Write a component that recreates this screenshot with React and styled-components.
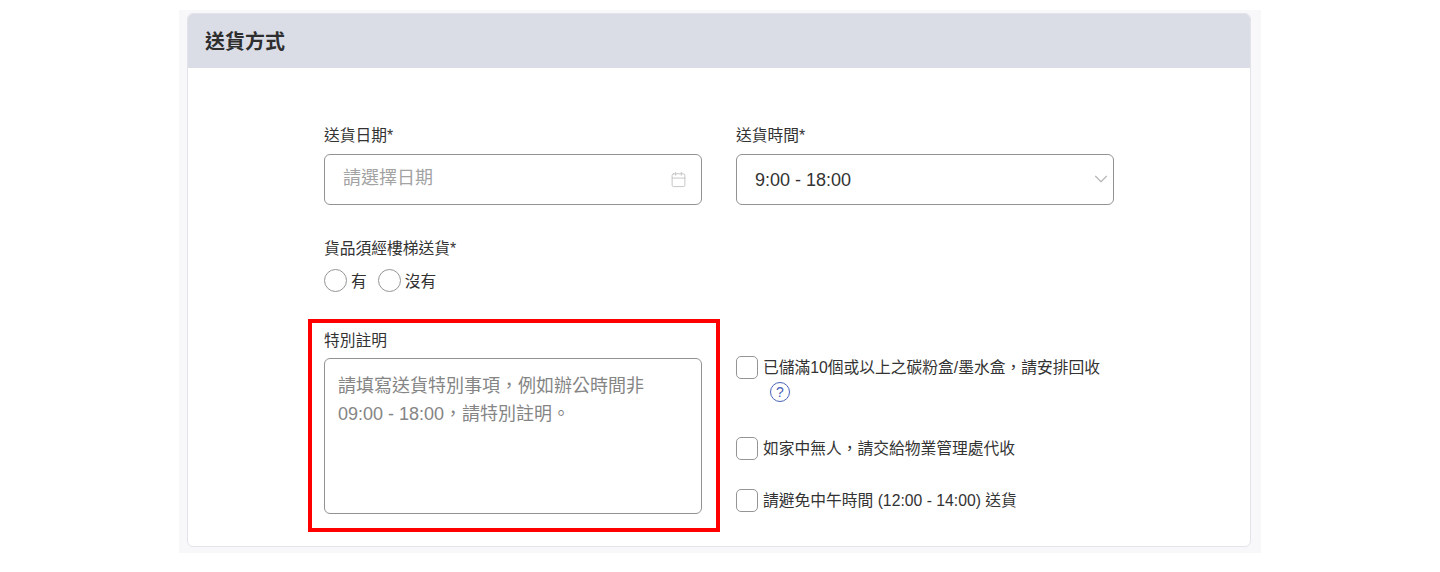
import React from "react";
import styled, { createGlobalStyle } from "styled-components";
import { ChevronDown, Calendar } from "lucide-react";

const Global = createGlobalStyle`
  html, body { margin: 0; padding: 0; background: #fff; }
  body { font-family: "Liberation Sans", "Noto Sans CJK TC", sans-serif; color: #333; }
  * { box-sizing: border-box; }
`;

const Page = styled.div`
  width: 1440px;
  height: 572px;
  padding-top: 10px;
  overflow: hidden;
`;
const Backdrop = styled.div`
  width: 1082px;
  height: 543px;
  margin-left: 179px;
  padding: 3px 10px 6px 8px;
  background: #f8f8fa;
`;
const Card = styled.section`
  height: 534px;
  background: #fff;
  border: 1px solid #e2e4ea;
  border-radius: 6px;
  overflow: hidden;
`;
const CardHeader = styled.h2`
  margin: -1px -1px 0;
  height: 55px;
  padding: 0 0 1px 18px;
  display: flex;
  align-items: center;
  background: #dadde6;
  font-weight: 700;
  font-size: 20px;
  color: #2e2e2e;
`;
const Form = styled.form`
  width: 790px;
  margin-left: 136px;
  padding-top: 58px;
  display: grid;
  grid-template-columns: 378px 378px;
  column-gap: 34px;
  align-items: start;
`;
const Field = styled.div`
  position: relative;
  display: flex;
  flex-direction: column;
  margin-bottom: ${(p) => p.$mb || 0}px;
  grid-column: ${(p) => p.$span || "auto"};
`;
const Label = styled.label`
  font-size: 15.75px;
  line-height: 20px;
  margin-bottom: ${(p) => p.$mb ?? 8}px;
  color: #333;
`;
const Control = styled.div`
  position: relative;
  height: 51px;
`;
const TextInput = styled.input`
  width: 100%;
  height: 100%;
  padding: 0 48px 3px 18px;
  border: 1px solid #929292;
  border-radius: 6px;
  background: #fff;
  font: inherit;
  font-size: 18px;
  color: #333;
  outline: none;
  &::placeholder { color: #a3a3a3; opacity: 1; }
`;
const SelectBox = styled.select`
  width: 100%;
  height: 100%;
  padding: 0 40px 0 18px;
  border: 1px solid #929292;
  border-radius: 6px;
  background: #fff;
  font: inherit;
  font-size: 18px;
  color: #333;
  appearance: none;
  outline: none;
`;
const TrailingIcon = styled.span`
  position: absolute;
  top: ${(p) => p.$top}px;
  right: ${(p) => p.$right}px;
  display: flex;
  color: ${(p) => p.$color};
  pointer-events: none;
`;
const RadioRow = styled.div`
  display: flex;
  align-items: center;
  height: 24px;
`;
const RadioOption = styled.label`
  display: flex;
  align-items: center;
  gap: 4px;
  margin-right: 11px;
  font-size: 15.75px;
  color: #333;
`;
const Radio = styled.input.attrs({ type: "radio" })`
  appearance: none;
  width: 23px;
  height: 23px;
  margin: 0;
  border: 1px solid #959595;
  border-radius: 50%;
  background: #fff;
`;
const NoteArea = styled.textarea`
  width: 378px;
  height: 156px;
  padding: 13px;
  border: 1px solid #929292;
  border-radius: 6px;
  background: #fff;
  font: inherit;
  font-size: 18px;
  line-height: 28px;
  resize: none;
  overflow: hidden;
  outline: none;
  &::placeholder { color: #858585; opacity: 1; }
`;
const Highlight = styled.div`
  position: absolute;
  top: -12px;
  left: -16px;
  right: -18px;
  bottom: -18px;
  border: 4px solid #fe0000;
  pointer-events: none;
`;
const Options = styled.div`
  display: flex;
  flex-direction: column;
  padding-top: 25px;
`;
const Option = styled.label`
  display: flex;
  align-items: flex-start;
  gap: 5px;
  margin-bottom: ${(p) => p.$mb}px;
  font-size: 15.75px;
  line-height: 24px;
  color: #333;
`;
const Check = styled.input.attrs({ type: "checkbox" })`
  appearance: none;
  flex: none;
  width: 22px;
  height: 23px;
  margin: 0;
  border: 1px solid #959595;
  border-radius: 5px;
  background: #fff;
`;
const OptionText = styled.span`
  flex: 1;
`;
const Help = styled.span`
  display: inline-flex;
  align-items: center;
  justify-content: center;
  width: 20px;
  height: 20px;
  margin: 2px 0 0 7px;
  vertical-align: top;
  border: 1px solid #4a62b8;
  border-radius: 50%;
  font-size: 14px;
  line-height: 1;
  color: #4a62b8;
`;

export default function App() {
  return (
    <Page lang="zh-TW">
      <Global />
      <Backdrop>
        <Card>
          <CardHeader>送貨方式</CardHeader>
          <Form>
            <Field $mb={34}>
              <Label>送貨日期*</Label>
              <Control>
                <TextInput placeholder="請選擇日期" />
                <TrailingIcon $top={17} $right={15} $color="#bdbdbd">
                  <Calendar size={17} strokeWidth={1.2} />
                </TrailingIcon>
              </Control>
            </Field>
            <Field $mb={34}>
              <Label>送貨時間*</Label>
              <Control>
                <SelectBox defaultValue="9:00 - 18:00">
                  <option>9:00 - 18:00</option>
                </SelectBox>
                <TrailingIcon $top={14} $right={2} $color="#b5b5b5">
                  <ChevronDown size={22} strokeWidth={1.2} />
                </TrailingIcon>
              </Control>
            </Field>
            <Field $span="1 / -1" $mb={39}>
              <Label $mb={9}>貨品須經樓梯送貨*</Label>
              <RadioRow>
                <RadioOption><Radio name="stairs" />有</RadioOption>
                <RadioOption><Radio name="stairs" />沒有</RadioOption>
              </RadioRow>
            </Field>
            <Field>
              <Label $mb={7}>特別註明</Label>
              <NoteArea placeholder="請填寫送貨特別事項，例如辦公時間非 09:00 - 18:00，請特別註明。" />
              <Highlight />
            </Field>
            <Options>
              <Option $mb={33}>
                <Check />
                <OptionText>已儲滿10個或以上之碳粉盒/墨水盒，請安排回收<Help>?</Help></OptionText>
              </Option>
              <Option $mb={28}>
                <Check />
                <OptionText>如家中無人，請交給物業管理處代收</OptionText>
              </Option>
              <Option $mb={0}>
                <Check />
                <OptionText>請避免中午時間 (12:00 - 14:00) 送貨</OptionText>
              </Option>
            </Options>
          </Form>
        </Card>
      </Backdrop>
    </Page>
  );
}
